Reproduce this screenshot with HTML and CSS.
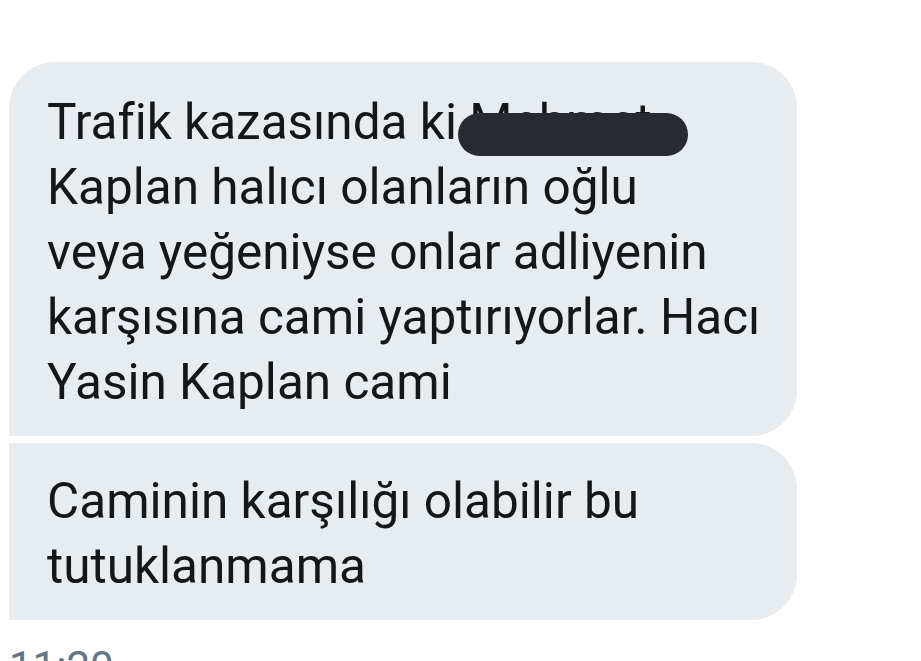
FILE: index.html
```html
<!DOCTYPE html>
<html lang="tr">
<head>
  <meta charset="UTF-8" />
  <title>Mesajlar</title>
  <link rel="stylesheet" href="styles.css">
</head>
<body>
  <div class="thread">
    <div class="bubble first">
      Trafik kazasında ki <span class="redacted">Mehmet</span><br>
      Kaplan halıcı olanların oğlu<br>
      veya yeğeniyse onlar adliyenin<br>
      karşısına cami yaptırıyorlar. Hacı<br>
      Yasin Kaplan cami
    </div>
    <div class="bubble last">
      Caminin karşılığı olabilir bu<br>
      tutuklanmama
    </div>
    <div class="time">11:20</div>
  </div>
</body>
</html>
```

FILE: styles.css
```css
body {
  margin: 0;
  background: #fff;
  font-family: Roboto, 'Noto Sans', sans-serif;
  color: #14171a;
  overflow: hidden;
}
.thread {
  padding: 62px 0 0 9px;
  display: flex;
  flex-direction: column;
  gap: 7px;
}
.bubble {
  width: 788px;
  box-sizing: border-box;
  background: #e6ecf0;
  font-size: 49.5px;
  line-height: 65px;
  padding: 0 16px 0 38px;
  white-space: nowrap;
}
.bubble.first {
  border-radius: 46px 46px 46px 0;
  padding-top: 28px;
  padding-bottom: 21px;
}
.bubble.last {
  border-radius: 0 46px 46px 0;
  padding-top: 26px;
  padding-bottom: 21px;
}
.redacted {
  position: relative;
}
.redacted::after {
  content: "";
  position: absolute;
  left: -11px;
  right: -36px;
  top: 20px;
  height: 43px;
  background: #272b30;
  border-radius: 22px;
}
.time {
  margin-top: 15px;
  font-size: 42px;
  color: #657786;
}
```
